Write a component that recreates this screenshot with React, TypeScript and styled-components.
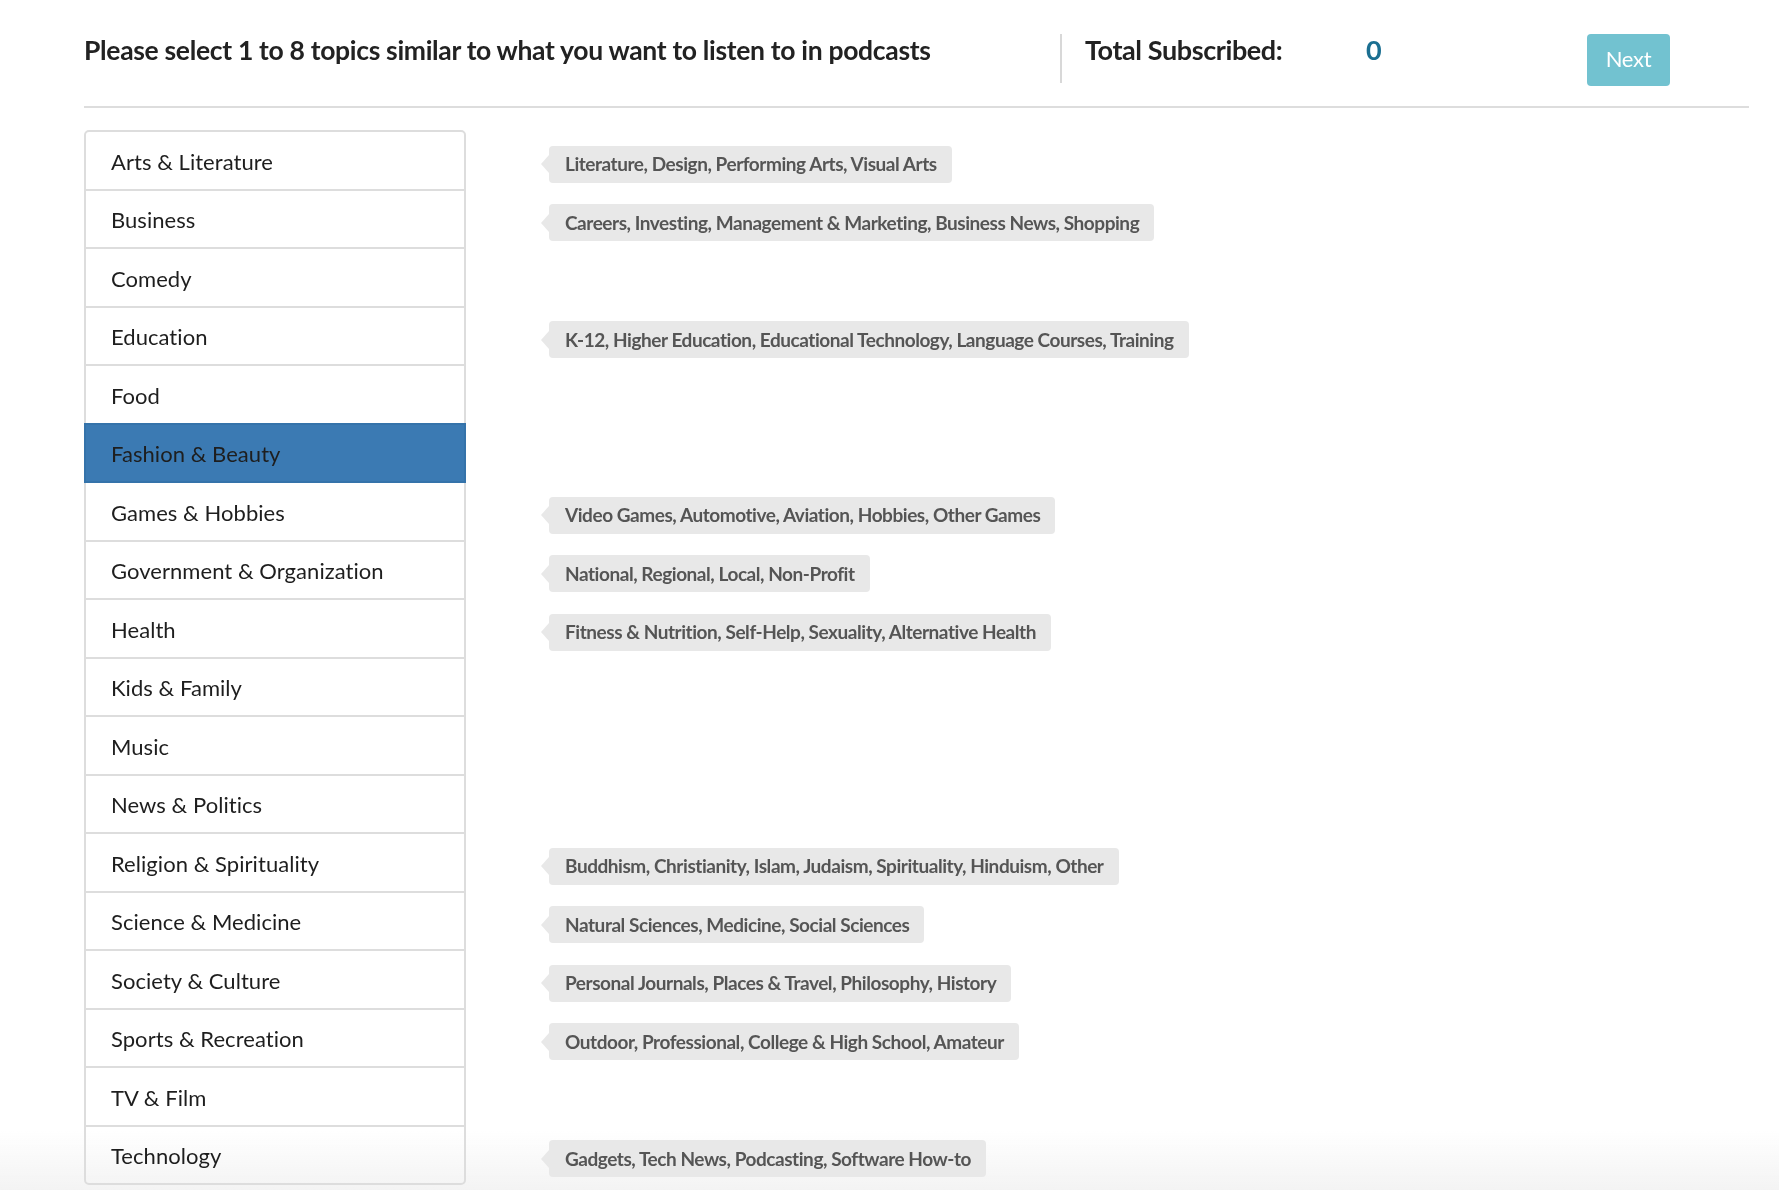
import React from "react";
import styled, { createGlobalStyle } from "styled-components";

const GlobalStyle = createGlobalStyle`
  html, body { margin: 0; padding: 0; background: #ffffff; }
  body { font-family: Lato, "Open Sans", "Liberation Sans", sans-serif; color: #222; }
  * { box-sizing: border-box; }
`;

const Page = styled.div`
  position: relative;
  z-index: 1;
  padding: 0 30px 0 84px;
  min-height: 1190px;
`;

const Header = styled.header`
  display: flex;
  align-items: flex-start;
  height: 108px;
  padding-top: 34px;
  border-bottom: 2px solid #dddddd;
`;

const Title = styled.h1`
  flex: 0 0 976px;
  margin: 0;
  margin-top: 1px;
  font-size: 26.5px;
  line-height: 30px;
  font-weight: 700;
  letter-spacing: -0.32px;
  color: #222;
`;

const Divider = styled.div`
  width: 2px;
  height: 49px;
  background: #d8d8d8;
`;

const StatLabel = styled.div`
  flex: 0 0 304px;
  padding-left: 23px;
  margin-top: 1px;
  font-size: 27px;
  line-height: 30px;
  font-weight: 700;
  letter-spacing: -0.4px;
  color: #222;
`;

const StatValue = styled.div`
  flex: 0 0 221px;
  margin-top: 1px;
  font-size: 27px;
  line-height: 30px;
  font-weight: 700;
  color: #1b6f91;
`;

const NextButton = styled.button`
  width: 83px;
  height: 52px;
  border: none;
  border-radius: 4px;
  background: #72c2d0;
  color: #ffffff;
  font-family: Lato, "Open Sans", "Liberation Sans", sans-serif;
  font-size: 22px;
  font-weight: 400;
  letter-spacing: -0.3px;
  padding: 0 0 3px;
  cursor: pointer;
`;

const Rows = styled.div`
  display: flex;
  flex-direction: column;
  padding-top: 22px;
`;

const Row = styled.div`
  display: flex;
  align-items: center;
  margin-bottom: -2px;
`;

const Item = styled.div<{ $active?: boolean; $first?: boolean; $last?: boolean }>`
  flex: 0 0 382px;
  height: 60.5px;
  display: flex;
  align-items: center;
  padding: 2px 24px 0 25px;
  border: 2px solid ${(p) => (p.$active ? "#3573aa" : "#dddddd")};
  background: ${(p) => (p.$active ? "#3b7ab3" : "transparent")};
  border-radius: ${(p) => (p.$first ? "5px 5px 0 0" : p.$last ? "0 0 5px 5px" : "0")};
  position: relative;
  z-index: ${(p) => (p.$active ? 1 : 0)};
  font-size: 22px;
  color: #1e1e1e;
  letter-spacing: 0.05px;
`;

const Tag = styled.div`
  position: relative;
  margin-left: 83px;
  margin-top: 8px;
  height: 37px;
  display: flex;
  align-items: center;
  padding: 0 15px 1px 16px;
  background: #e8e8e8;
  border-radius: 4px;
  font-size: 19px;
  font-weight: 700;
  color: #555555;
  letter-spacing: -0.45px;
  white-space: nowrap;

  &::before {
    content: "";
    position: absolute;
    left: -8px;
    top: 50%;
    margin-top: -9px;
    border-style: solid;
    border-width: 9px 8px 9px 0;
    border-color: transparent #e8e8e8 transparent transparent;
  }
`;

const BottomFade = styled.div`
  position: fixed;
  left: 0;
  right: 0;
  bottom: 0;
  height: 60px;
  z-index: 0;
  pointer-events: none;
  background: linear-gradient(to bottom, rgba(240, 240, 240, 0), rgba(236, 236, 236, 0.6));
`;

const topics: { name: string; sub?: string }[] = [
  { name: "Arts & Literature", sub: "Literature, Design, Performing Arts, Visual Arts" },
  { name: "Business", sub: "Careers, Investing, Management & Marketing, Business News, Shopping" },
  { name: "Comedy" },
  { name: "Education", sub: "K-12, Higher Education, Educational Technology, Language Courses, Training" },
  { name: "Food" },
  { name: "Fashion & Beauty" },
  { name: "Games & Hobbies", sub: "Video Games, Automotive, Aviation, Hobbies, Other Games" },
  { name: "Government & Organization", sub: "National, Regional, Local, Non-Profit" },
  { name: "Health", sub: "Fitness & Nutrition, Self-Help, Sexuality, Alternative Health" },
  { name: "Kids & Family" },
  { name: "Music" },
  { name: "News & Politics" },
  { name: "Religion & Spirituality", sub: "Buddhism, Christianity, Islam, Judaism, Spirituality, Hinduism, Other" },
  { name: "Science & Medicine", sub: "Natural Sciences, Medicine, Social Sciences" },
  { name: "Society & Culture", sub: "Personal Journals, Places & Travel, Philosophy, History" },
  { name: "Sports & Recreation", sub: "Outdoor, Professional, College & High School, Amateur" },
  { name: "TV & Film" },
  { name: "Technology", sub: "Gadgets, Tech News, Podcasting, Software How-to" },
];

export default function App() {
  return (
    <>
      <GlobalStyle />
      <BottomFade />
      <Page>
        <Header>
          <Title>Please select 1 to 8 topics similar to what you want to listen to in podcasts</Title>
          <Divider />
          <StatLabel>Total Subscribed:</StatLabel>
          <StatValue>0</StatValue>
          <NextButton>Next</NextButton>
        </Header>
        <Rows>
          {topics.map((t, i) => (
            <Row key={t.name}>
              <Item
                $active={t.name === "Fashion & Beauty"}
                $first={i === 0}
                $last={i === topics.length - 1}
              >
                {t.name}
              </Item>
              {t.sub && <Tag>{t.sub}</Tag>}
            </Row>
          ))}
        </Rows>
      </Page>
    </>
  );
}
